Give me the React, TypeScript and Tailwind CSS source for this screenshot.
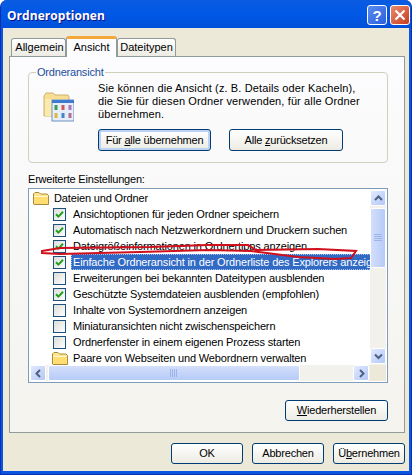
import React from 'react';

const settings = [
  { label: 'Ansichtoptionen für jeden Ordner speichern', checked: true },
  { label: 'Automatisch nach Netzwerkordnern und Druckern suchen', checked: true },
  { label: 'Dateigrößeinformationen in Ordnertipps anzeigen', checked: true },
  { label: 'Einfache Ordneransicht in der Ordnerliste des Explorers anzeigen', checked: true, selected: true },
  { label: 'Erweiterungen bei bekannten Dateitypen ausblenden', checked: false },
  { label: 'Geschützte Systemdateien ausblenden (empfohlen)', checked: true },
  { label: 'Inhalte von Systemordnern anzeigen', checked: false },
  { label: 'Miniaturansichten nicht zwischenspeichern', checked: false },
  { label: 'Ordnerfenster in einem eigenen Prozess starten', checked: false },
];

const FolderIcon = () => (
  <svg width="16" height="13" viewBox="0 0 16 13" className="shrink-0">
    <path d="M0.5 12V2L2 .5h4L7.500 2H14L15.500 3.500v9H1z" fill="#FFE68C" stroke="#A88A3A" />
    <path d="M1.500 12V4.500h13V12z" fill="#FFDD70" />
    <path d="M1.500 4.500h13" stroke="#FFF8D0" />
  </svg>
);

const Check = () => (
  <div className="w-[13px] h-[13px] shrink-0 border border-[#1C5180] bg-gradient-to-br from-[#DCDCD7] to-white flex items-center justify-center">
    <svg width="9" height="9" viewBox="0 0 9 9">
      <path d="M1 4.200 3.400 6.600 8 1.800" fill="none" stroke="#21A121" strokeWidth="2" />
    </svg>
  </div>
);

const Empty = () => (
  <div className="w-[13px] h-[13px] shrink-0 border border-[#1C5180] bg-gradient-to-br from-[#DCDCD7] to-white" />
);

const Btn = ({ className, children }: { className: string; children: React.ReactNode }) => (
  <div className={`flex items-center justify-center border border-[#003C74] rounded-[3px] bg-gradient-to-b from-white to-[#ECEBE3] text-black tracking-[-0.2px] ${className}`}>
    {children}
  </div>
);

const ScrollBtn = ({ d, className }: { d: string; className: string }) => (
  <div className={`w-[16px] h-[16px] shrink-0 flex items-center justify-center rounded-[2px] border border-white bg-gradient-to-br from-[#E1EAFE] to-[#B4C8F6] ${className}`}>
    <svg width="9" height="9" viewBox="0 0 9 9">
      <path d={d} fill="none" stroke="#4D6185" strokeWidth="2" />
    </svg>
  </div>
);

export default function App() {
  return (
    <div className="relative w-[416px] h-[475px] bg-white overflow-hidden font-['Liberation_Sans',sans-serif] text-[11px] leading-[13px] text-black">
      <div className="w-[412px] h-[475px] flex flex-col rounded-t-[7px] overflow-hidden border-x border-b border-[#0A2FB0] bg-[#0B55E0]">
        {/* title bar */}
        <div className="h-[28px] shrink-0 -mx-px flex items-center justify-between pl-[7px] pr-[2px] bg-gradient-to-b from-[#0A5BE0] via-[#0058E6] to-[#0250D8]">
          <span className="font-['Open_Sans',sans-serif] font-bold text-[12px] tracking-[0.05px] text-white [text-shadow:1px_1px_#0F1089] mt-[3px]">Ordneroptionen</span>
          <div className="flex gap-[3px] mt-[2px]">
            <div className="w-[20px] h-[20px] flex items-center justify-center rounded-[3px] border border-white bg-gradient-to-br from-[#5B8CF0] to-[#2A5FDC] text-white font-bold text-[15px]">?</div>
            <div className="w-[20px] h-[20px] flex items-center justify-center rounded-[3px] border border-white bg-gradient-to-br from-[#E98A6E] to-[#C8391A]">
              <svg width="12" height="12" viewBox="0 0 12 12">
                <path d="M1.500 1.500 10.500 10.500M10.500 1.500 1.500 10.500" stroke="white" strokeWidth="2.200" />
              </svg>
            </div>
          </div>
        </div>

        {/* client area */}
        <div className="flex-1 flex flex-col mx-[2px] mb-[3px] bg-[#ECE9D8] pl-[6px] pr-[4px] pt-[8px]">
          <div className="flex items-end h-[21px] -mb-px pl-[2px] relative z-10">
            <div className="w-[55px] h-[18px] flex items-center justify-center pl-[2px] bg-gradient-to-b from-white to-[#ECEBE3] border border-b-0 border-[#919B9C] rounded-t-[3px] mb-px">Allgemein</div>
            <div className="w-[51px] h-[21px] flex items-center justify-center bg-[#FCFCFE] border-x border-[#919B9C] border-t-[3px] border-t-[#F5A83A] rounded-t-[3px] pb-[2px]">Ansicht</div>
            <div className="w-[59px] h-[18px] flex items-center justify-center bg-gradient-to-b from-white to-[#ECEBE3] border border-b-0 border-[#919B9C] rounded-t-[3px] mb-px">Dateitypen</div>
          </div>

          {/* tab page */}
          <div className="h-[377px] border border-[#919B9C] bg-gradient-to-b from-[#FCFCFE] to-[#F4F3EE] pl-[18px] pr-[16px] pt-[9px]">
            <fieldset className="h-[97px] border border-[#D0D0BF] rounded-[4px] pl-[14px]">
              <legend className="-ml-[7px] px-px text-[#1B4E9B] tracking-[-0.2px]">Ordneransicht</legend>
              <div className="flex pt-[3px]">
                <svg width="31" height="31" viewBox="0 0 31 31" className="shrink-0 mt-[9px] mr-[24px]">
                  <path d="M1 25V5l2-3h7l2 2h13l1 2v19z" fill="#F7DE92" stroke="#CBB26C" />
                  <path d="M2 8h23v17H2z" fill="#FBEAAE" />
                  <rect x="9" y="9" width="22" height="21" fill="#E8EEF8" stroke="#6C8FC4" />
                  <rect x="9" y="9" width="22" height="3" fill="#3E7BD0" />
                  <rect x="11.500" y="14" width="3" height="5" fill="#3C9A58" />
                  <rect x="18.500" y="14" width="3" height="5" fill="#C85A5A" />
                  <rect x="25.500" y="14" width="3" height="5" fill="#A878B8" />
                  <rect x="11.500" y="22" width="3" height="5" fill="#D8B848" />
                  <rect x="18.500" y="22" width="3" height="5" fill="#3C88C8" />
                  <rect x="25.500" y="22" width="3" height="5" fill="#B0708C" />
                </svg>
                <div>
                  <div className="tracking-[0.12px]">
                    <p className="whitespace-nowrap">Sie können die Ansicht (z. B. Details oder Kacheln),</p>
                    <p className="whitespace-nowrap">die Sie für diesen Ordner verwenden, für alle Ordner</p>
                    <p className="whitespace-nowrap">übernehmen.</p>
                  </div>
                  <div className="flex gap-[18px] mt-[8px]">
                    <Btn className="w-[113px] h-[22px] shadow-[inset_0_0_0_2px_#BCD2F2]"><span>Für <u>a</u>lle übernehmen</span></Btn>
                    <Btn className="w-[114px] h-[22px]"><span>Alle <u>z</u>urücksetzen</span></Btn>
                  </div>
                </div>
              </div>
            </fieldset>

            <p className="mt-[10px] tracking-[-0.2px]">Erweiterte Einstellungen:</p>

            {/* settings list */}
            <div className="mt-[2px] h-[195px] border border-[#7F9DB9] bg-white p-px flex flex-col">
              <div className="flex h-[175px]">
                <div className="flex-1 min-w-0 overflow-hidden tracking-[-0.15px]">
                  <div className="h-[16px] flex items-center pl-[3px] whitespace-nowrap">
                    <FolderIcon />
                    <span className="pl-[5px]">Dateien und Ordner</span>
                  </div>
                  {settings.map(s => (
                    <div key={s.label} className="h-[16px] flex items-center pl-[23px] whitespace-nowrap">
                      {s.checked ? <Check /> : <Empty />}
                      <span className={`ml-[5px] h-[16px] pl-[2px] flex-1 flex items-center ${s.selected ? 'bg-[#316AC5] text-white outline-1 -outline-offset-1 outline-dotted outline-[#A9C1E8]' : ''}`}>
                        {s.label}
                      </span>
                    </div>
                  ))}
                  <div className="h-[16px] flex items-center pl-[22px] whitespace-nowrap">
                    <FolderIcon />
                    <span className="pl-[5px]">Paare von Webseiten und Webordnern verwalten</span>
                  </div>
                </div>
                {/* vertical scrollbar */}
                <div className="w-[16px] shrink-0 flex flex-col bg-[#F3F1EC]">
                  <ScrollBtn d="M1 6 4.500 2.500 8 6" className="" />
                  <div className="mt-[2px] h-[60px] flex items-center justify-center rounded-[2px] border border-white bg-gradient-to-r from-[#D3DFFB] to-[#B7CBF8]">
                    <svg width="8" height="8" viewBox="0 0 8 8"><path d="M0 .5h8M0 2.500h8M0 4.500h8M0 6.500h8" stroke="#9DB4E8" /></svg>
                  </div>
                  <div className="flex-1" />
                  <ScrollBtn d="M1 2.500 4.500 6 8 2.500" className="mb-[1px]" />
                </div>
              </div>
              {/* horizontal scrollbar */}
              <div className="h-[16px] shrink-0 flex bg-[#F3F1EC]">
                <ScrollBtn d="M6 1 2.500 4.500 6 8" className="" />
                <div className="ml-[2px] w-[252px] flex items-center justify-center rounded-[2px] border border-white bg-gradient-to-b from-[#D3DFFB] to-[#B7CBF8]">
                  <svg width="8" height="8" viewBox="0 0 8 8"><path d="M.5 0v8M2.500 0v8M4.500 0v8M6.500 0v8" stroke="#9DB4E8" /></svg>
                </div>
                <div className="flex-1" />
                <ScrollBtn d="M3 1 6.500 4.500 3 8" className="mr-[1px]" />
                <div className="w-[16px] shrink-0 bg-[#ECE9D8]" />
              </div>
            </div>

            <div className="flex justify-end mt-[17px]">
              <Btn className="w-[103px] h-[21px]"><span><u>W</u>iederherstellen</span></Btn>
            </div>
          </div>

          {/* dialog buttons */}
          <div className="flex justify-end gap-[9px] mt-[10px]">
            <Btn className="w-[72px] h-[21px]">OK</Btn>
            <Btn className="w-[72px] h-[21px]">Abbrechen</Btn>
            <Btn className="w-[72px] h-[21px]"><span>Ü<u>b</u>ernehmen</span></Btn>
          </div>
        </div>
      </div>

      {/* red marker scribble drawn over the screenshot */}
      <svg width="416" height="475" className="absolute left-0 top-0 pointer-events-none">
        <path d="M42 251 60 248 150 247 208 245 248 245 256 250 318 249 356 251 351 258 335 259 298 257 251 251 208 250 140 252 60 254 42 253Z" fill="none" stroke="#D0101C" strokeWidth="2" />
      </svg>
    </div>
  );
}
